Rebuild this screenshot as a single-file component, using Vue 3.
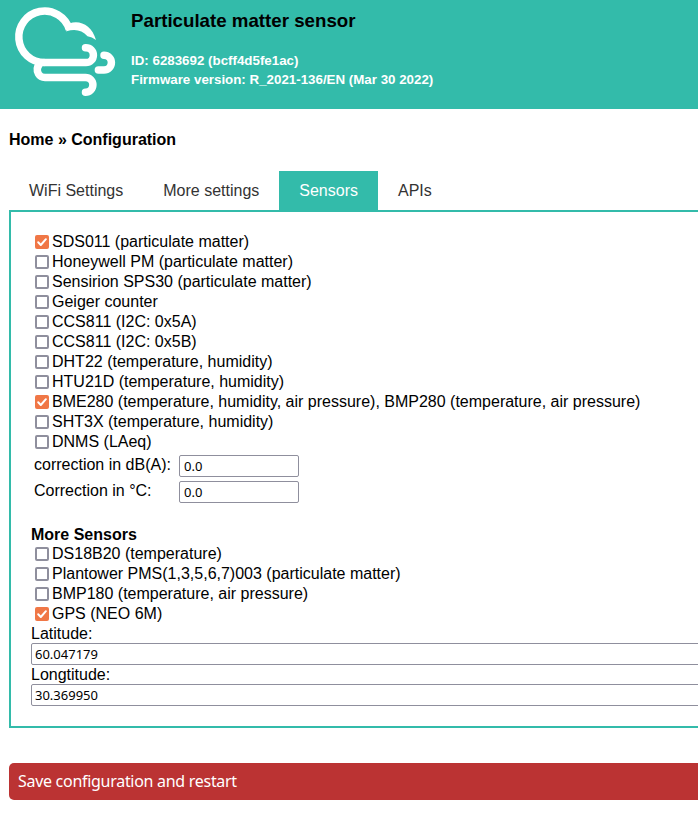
<script setup>
import { ref, reactive } from 'vue'

const tabs = ['WiFi Settings', 'More settings', 'Sensors', 'APIs']
const active = ref('Sensors')

const sensors = reactive([
  { name: 'SDS011 (particulate matter)', on: true },
  { name: 'Honeywell PM (particulate matter)', on: false },
  { name: 'Sensirion SPS30 (particulate matter)', on: false },
  { name: 'Geiger counter', on: false },
  { name: 'CCS811 (I2C: 0x5A)', on: false },
  { name: 'CCS811 (I2C: 0x5B)', on: false },
  { name: 'DHT22 (temperature, humidity)', on: false },
  { name: 'HTU21D (temperature, humidity)', on: false },
  { name: 'BME280 (temperature, humidity, air pressure), BMP280 (temperature, air pressure)', on: true },
  { name: 'SHT3X (temperature, humidity)', on: false },
  { name: 'DNMS (LAeq)', on: false },
])

const moreSensors = reactive([
  { name: 'DS18B20 (temperature)', on: false },
  { name: 'Plantower PMS(1,3,5,6,7)003 (particulate matter)', on: false },
  { name: 'BMP180 (temperature, air pressure)', on: false },
  { name: 'GPS (NEO 6M)', on: true },
])

const corrections = reactive([
  { label: 'correction in dB(A):', value: '0.0' },
  { label: 'Correction in °C:', value: '0.0' },
])

const position = reactive([
  { label: 'Latitude:', value: '60.047179' },
  { label: 'Longtitude:', value: '30.369950' },
])
</script>

<template>
  <div class="page">
    <header class="banner">
      <svg class="logo" viewBox="0 0 125 109" width="125" height="109" aria-hidden="true">
        <g fill="none" stroke="#fff" stroke-width="7.5">
          <path d="M69.300 29.300A25.8 25.8 0 1 0 44.600 62.600" />
          <path d="M44.600 62.600H86A7.4 7.4 0 0 0 86 47.800H85.500" stroke-linecap="round" />
          <path d="M39.500 64C37 67 36.800 71 38.500 74Q40.500 77.400 45 77.400H85.500A7.4 7.4 0 0 1 85.500 92.200" stroke-linecap="round" />
          <path d="M104 55.200A7.4 7.4 0 0 1 104 70H98.4" stroke-linecap="round" />
        </g>
        <path fill="#fff" d="M66 31.500L69.300 23.500C80 19.500 92 25.500 96 40Q92 37 87.500 36.300C82 30 75 28.500 66.500 31.300Z" />
      </svg>
      <div class="identity">
        <h1>Particulate matter sensor</h1>
        <p>ID: 6283692 (bcff4d5fe1ac)<br>Firmware version: R_2021-136/EN (Mar 30 2022)</p>
      </div>
    </header>

    <main class="content">
      <h2 class="crumbs">Home » Configuration</h2>
      <nav class="tabs">
        <button v-for="tab in tabs" :key="tab" class="tab" :class="{ active: tab === active }" @click="active = tab">{{ tab }}</button>
      </nav>

      <section class="panel">
        <label v-for="s in sensors" :key="s.name" class="check">
          <input v-model="s.on" type="checkbox">
          <span class="box"><svg v-if="s.on" viewBox="0 0 14 14"><path d="M3.2 7.3L5.8 10L10.900 4.200" /></svg></span>
          <span>{{ s.name }}</span>
        </label>

        <div class="corrections">
          <label v-for="c in corrections" :key="c.label" class="correction">
            <span>{{ c.label }}</span>
            <input v-model="c.value" class="field">
          </label>
        </div>

        <h3>More Sensors</h3>
        <label v-for="s in moreSensors" :key="s.name" class="check">
          <input v-model="s.on" type="checkbox">
          <span class="box"><svg v-if="s.on" viewBox="0 0 14 14"><path d="M3.2 7.3L5.8 10L10.900 4.200" /></svg></span>
          <span>{{ s.name }}</span>
        </label>

        <label v-for="p in position" :key="p.label" class="position">
          <span>{{ p.label }}</span>
          <input v-model="p.value" class="field">
        </label>
      </section>

      <button class="save">Save configuration and restart</button>
    </main>
  </div>
</template>

<style>
body {
  margin: 0;
  background: #fff;
}
</style>

<style scoped>
.page {
  height: 826px;
  overflow: hidden;
  box-sizing: border-box;
  font: 16px/20px "Liberation Sans", Arial, sans-serif;
  color: #000;
}
.banner {
  display: flex;
  height: 109px;
  background: #33bbaa;
}
.logo {
  flex: none;
  display: block;
}
.identity {
  padding: 10px 0 0 6px;
}
h1 {
  margin: 0;
  font-size: 18.72px;
  line-height: 22px;
}
p {
  margin: 19px 0 0;
  font-size: 13.333px;
  line-height: 19px;
  font-weight: bold;
  color: #fff;
}
.content {
  width: 900px;
  padding: 21px 0 0 9px;
}
.crumbs {
  margin: 0;
  font-size: 16px;
  line-height: 20px;
}
.tabs {
  display: flex;
  margin-top: 21px;
}
.tab {
  border: 0;
  padding: 0 20px;
  height: 39px;
  background: transparent;
  color: #333;
  font: inherit;
}
.tab.active {
  background: #33bbaa;
  color: #fff;
}
.panel {
  box-sizing: border-box;
  height: 518px;
  border: 2px solid #33bbaa;
  padding: 20px;
}
.check {
  display: flex;
  align-items: center;
  height: 20px;
  padding-left: 4px;
  gap: 3px;
}
.check input {
  appearance: none;
  display: none;
}
.box {
  box-sizing: border-box;
  width: 14px;
  height: 14px;
  border: 2px solid #8f8f9d;
  border-radius: 2px;
}
.box:has(svg) {
  border: 0;
  background: #f07746;
}
.box svg {
  display: block;
  fill: none;
  stroke: #fff;
  stroke-width: 2;
  stroke-linecap: round;
  stroke-linejoin: round;
}
.corrections {
  display: grid;
  gap: 4px;
  padding: 3px 0 0 3px;
}
.correction {
  display: grid;
  grid-template-columns: 145px 120px;
  line-height: 19px;
}
.field {
  box-sizing: border-box;
  width: 100%;
  height: 22px;
  border: 1px solid #8f8f9d;
  border-radius: 2px;
  padding: 0 3px 1px;
  background: #fff;
  color: #000;
  font: 13px/18px "Noto Sans", sans-serif;
  outline: none;
}
.correction .field {
  padding-left: 4px;
}
h3 {
  margin: 22px 0 0;
  font-size: 16px;
  line-height: 19px;
}
.position {
  display: block;
  height: 41px;
  line-height: 19px;
}
.position span,
.position .field {
  display: block;
}
.save {
  display: block;
  width: 100%;
  height: 37px;
  margin-top: 35px;
  border: 0;
  border-radius: 5px;
  padding: 0 9px 2px;
  background: #bb3333;
  color: #fff;
  text-align: left;
  font: 16px/20px "Noto Sans", sans-serif;
  letter-spacing: -0.29px;
}
</style>
